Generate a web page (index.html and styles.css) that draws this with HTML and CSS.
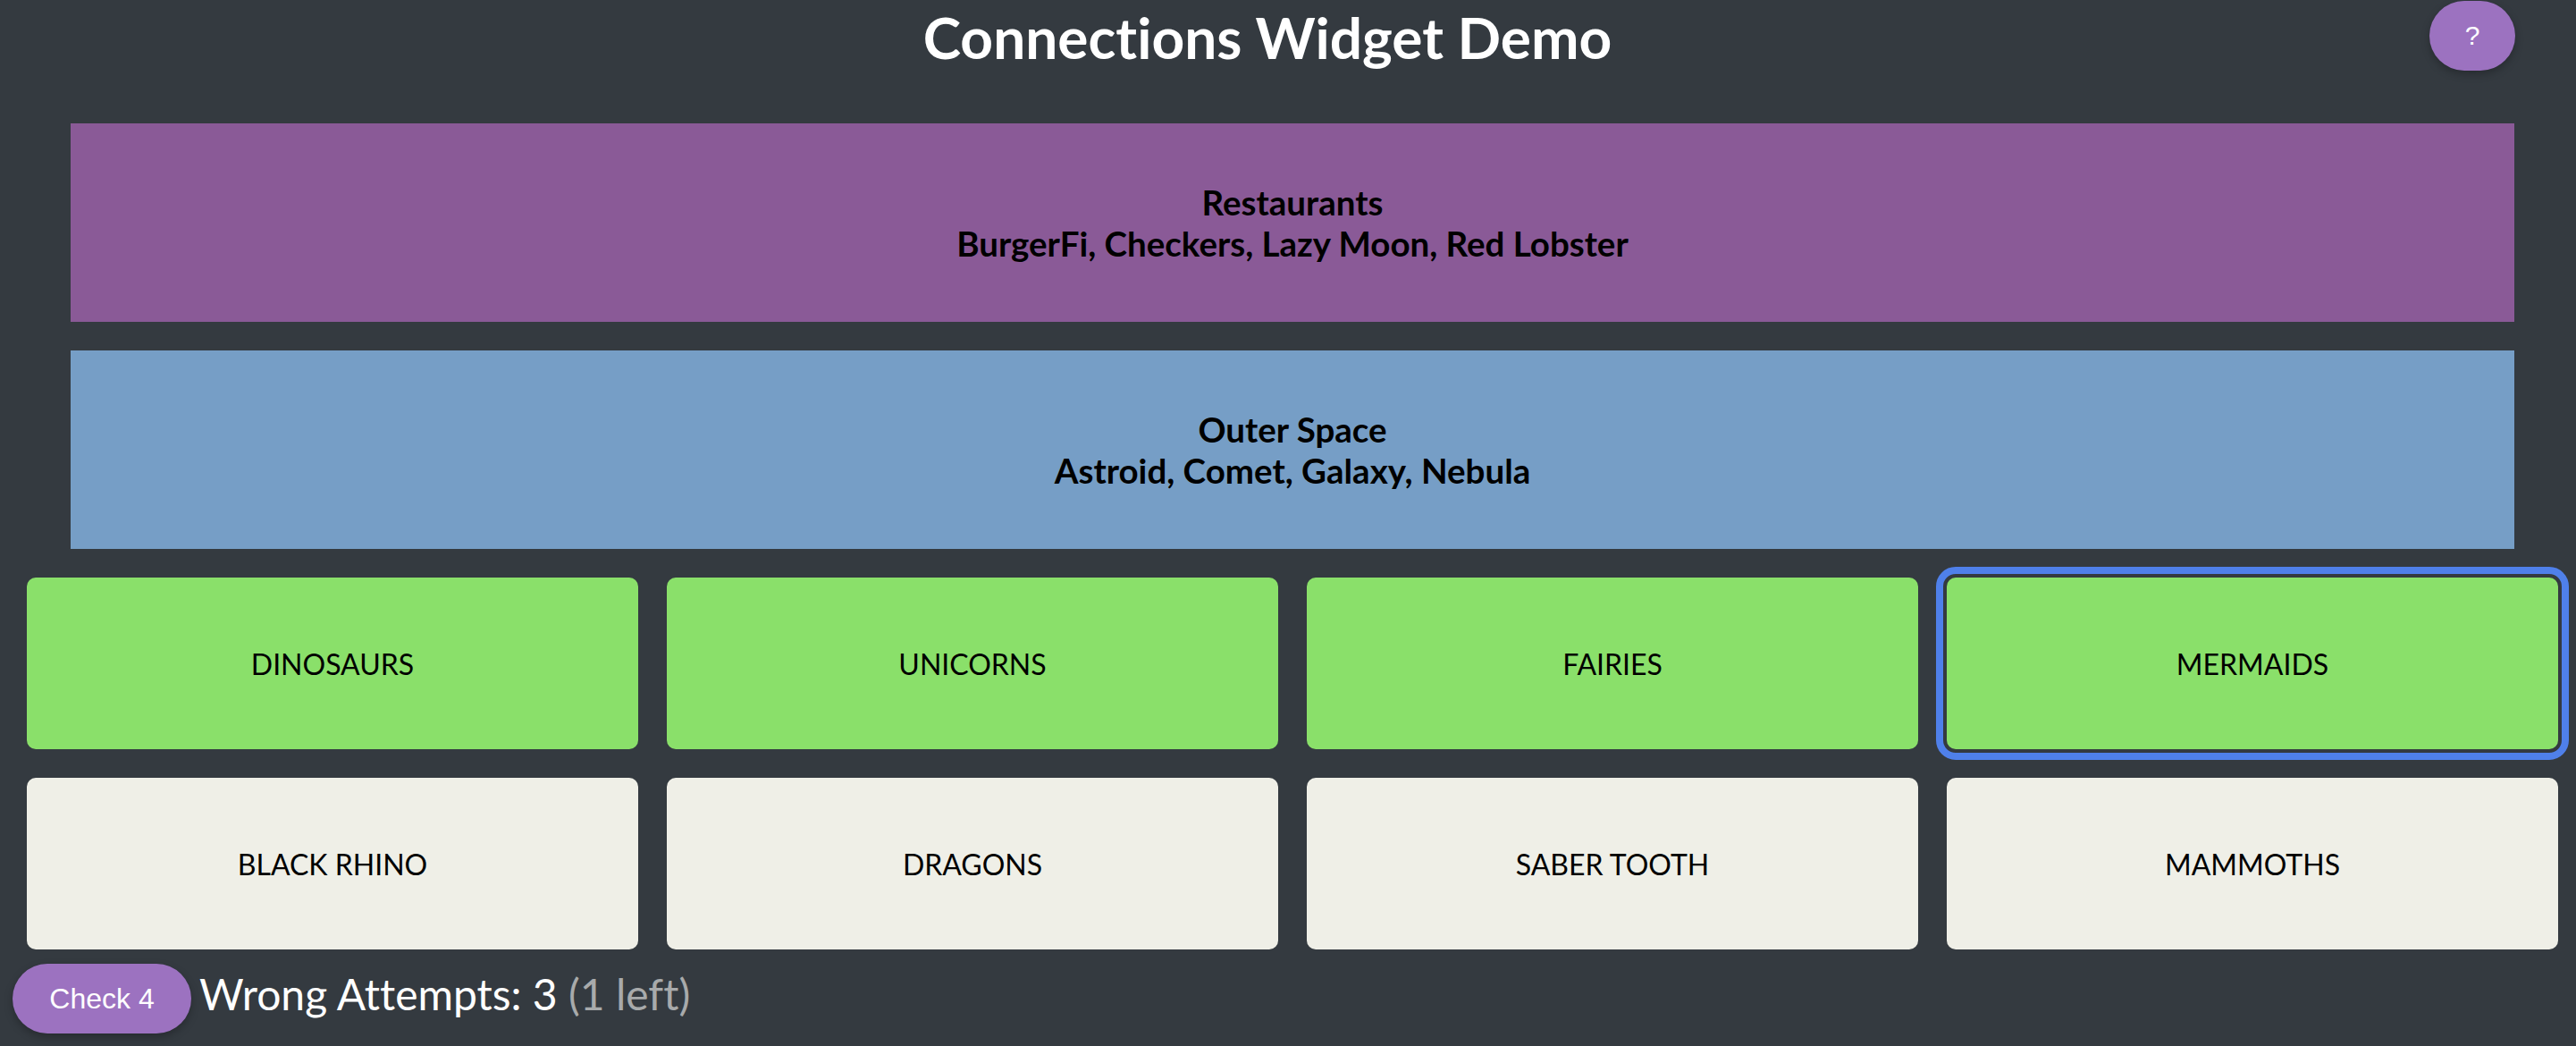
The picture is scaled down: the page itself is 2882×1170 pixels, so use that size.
FILE: index.html
```html
<!DOCTYPE html>
<html lang="en">
<head>
<meta charset="utf-8">
<title>Connections Widget Demo</title>
<link rel="stylesheet" href="styles.css">
</head>
<body>
<div class="page">
  <header class="header">
    <span class="header-spacer"></span>
    <h1 class="title">Connections Widget Demo</h1>
    <button class="pill help-btn">?</button>
  </header>
  <section class="bands">
    <div class="band band-purple">
      <div class="band-name">Restaurants</div>
      <div class="band-items">BurgerFi, Checkers, Lazy Moon, Red Lobster</div>
    </div>
    <div class="band band-blue">
      <div class="band-name">Outer Space</div>
      <div class="band-items">Astroid, Comet, Galaxy, Nebula</div>
    </div>
  </section>
  <section class="grid">
    <div class="card card-selected">DINOSAURS</div>
    <div class="card card-selected">UNICORNS</div>
    <div class="card card-selected">FAIRIES</div>
    <div class="card card-selected card-focus">MERMAIDS</div>
    <div class="card">BLACK RHINO</div>
    <div class="card">DRAGONS</div>
    <div class="card">SABER TOOTH</div>
    <div class="card">MAMMOTHS</div>
  </section>
  <footer class="footer">
    <button class="pill check-btn">Check 4</button>
    <span class="attempts">Wrong Attempts: 3 <span class="left">(1 left)</span></span>
  </footer>
</div>
</body>
</html>
```
FILE: styles.css
```css
html, body {
  margin: 0;
  padding: 0;
  background: #343a40;
}
body {
  font-family: Lato, "Open Sans", sans-serif;
  font-variant-ligatures: none;
  color: #fff;
  width: 2882px;
  height: 1170px;
  overflow: hidden;
}
.page {
  padding: 0 20px 0 14px;
}
.header {
  display: grid;
  grid-template-columns: 1fr auto 1fr;
  align-items: start;
  margin: 0 48px 0 8px;
  height: 89px;
}
.title {
  margin: -3px 0 0 0;
  font-size: 64px;
  font-weight: 700;
  line-height: 89px;
  color: #fff;
  white-space: nowrap;
}
.pill {
  border: none;
  background: #9c72c0;
  color: #fff;
  font-family: "Liberation Sans", Arial, sans-serif;
  font-size: 32px;
  height: 78px;
  border-radius: 39px;
  box-shadow: 0 4px 10px rgba(0, 0, 0, 0.25);
  cursor: pointer;
}
.help-btn {
  justify-self: end;
  width: 96px;
  margin-top: 1px;
  padding: 0;
  font-size: 30px;
}
.bands {
  display: flex;
  flex-direction: column;
  gap: 32px;
  margin: 49px 49px 0 65px;
}
.band {
  height: 222px;
  display: flex;
  flex-direction: column;
  align-items: center;
  justify-content: center;
  color: #000;
  font-weight: 700;
  font-size: 38.5px;
  line-height: 46px;
}
.band-purple { background: #8a5a97; }
.band-blue { background: #769ec6; }
.grid {
  display: grid;
  grid-template-columns: repeat(4, 684px);
  grid-auto-rows: 192px;
  gap: 32px;
  margin: 32px 0 0 16px;
}
.card {
  background: #efefe7;
  color: #000;
  border-radius: 10px;
  display: flex;
  align-items: center;
  justify-content: center;
  font-size: 32px;
}
.card-selected { background: #8ae06a; }
.card-focus {
  outline: 8px solid #4f80ea;
  outline-offset: 4px;
}
.footer {
  display: flex;
  align-items: center;
  gap: 9px;
  margin-top: 16px;
}
.check-btn {
  width: 200px;
  padding: 0;
}
.attempts {
  font-size: 48px;
  color: #fff;
  margin-top: -12px;
}
.left {
  color: #a8aaab;
}
```
